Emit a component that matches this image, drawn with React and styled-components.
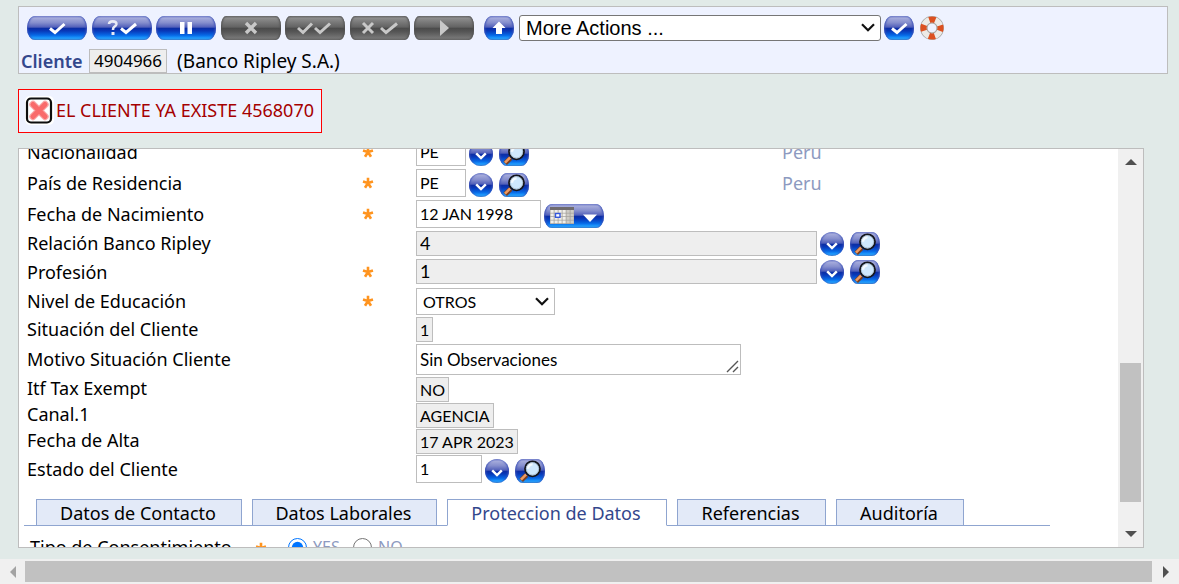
import React from 'react';
import styled, { createGlobalStyle, css } from 'styled-components';

const labelFont = '"Noto Sans", "Open Sans", sans-serif';
const fieldFont = 'Lato, "Noto Sans", sans-serif';
const uiFont = '"Liberation Sans", Arial, sans-serif';

const GlobalStyle = createGlobalStyle`
  *, *::before, *::after { box-sizing: border-box; }
  body { margin: 0; background: #e1eae8; color: #000; font-family: ${labelFont}; font-size: 18px; }
  button, input, select, textarea { font: inherit; color: inherit; margin: 0; }
`;

const Page = styled.div`
  display: flex;
  flex-direction: column;
  height: 100vh;
  overflow: hidden;
  padding-top: 6px;
`;

const Header = styled.header`
  margin: 0 11px 0 18px;
  background: #eef2ff;
  border: 1px solid #bdbdbd;
  height: 68px;
  flex: none;
`;

const Toolbar = styled.div`
  display: flex;
  align-items: center;
  padding: 8px 8px 0;
`;

const ActionGroup = styled.div`
  display: flex;
  justify-content: space-between;
  width: 447px;
  margin-right: 10px;
`;

const blueGloss = css`
  background: linear-gradient(180deg, #7b86cc 0%, #a3a9da 10%, #858ecd 28%, #5361ba 46%, #0c2ea6 52%, #0838b8 62%, #0668e6 80%, #1e9cff 92%, #3a86d0 100%);
  box-shadow: inset 2px 0 2px -1px #3a50b8, inset -2px 0 2px -1px #3a50b8;
`;
const greyGloss = css`
  background: linear-gradient(180deg, #6a6a6a 0%, #8c8c8c 10%, #747474 30%, #626262 47%, #4a4a4a 50%, #565656 66%, #747474 90%, #6a6a6a 100%);
  box-shadow: inset 2px 0 2px -1px #505050, inset -2px 0 2px -1px #505050;
`;

const GlossButton = styled.button`
  display: flex;
  align-items: center;
  justify-content: center;
  flex: none;
  width: ${(p) => p.$width || 60}px;
  height: 24px;
  padding: 0;
  border: 0;
  border-radius: ${(p) => (p.$round ? '12px' : p.$grey ? '5px / 10px' : '8px / 12px')};
  ${(p) => (p.$grey ? greyGloss : blueGloss)}
  svg { display: block; }
`;

const SelectWrap = styled.span`
  position: relative;
  display: inline-flex;
  width: 139px;
  svg { position: absolute; right: 6px; top: 50%; margin-top: -5px; pointer-events: none; }
`;

const ActionsWrap = styled(SelectWrap)`
  width: 362px;
  margin: 0 3px 0 5px;
`;

const ActionSelect = styled.select`
  appearance: none;
  width: 100%;
  height: 26px;
  padding: 0 24px 0 6px;
  font-family: ${uiFont};
  font-size: 20px;
  background: #fff;
  border: 1px solid #767676;
  border-radius: 3px;
`;

const FormSelect = styled.select`
  appearance: none;
  width: 100%;
  height: 27px;
  padding: 0 24px 0 6px;
  font-family: ${fieldFont};
  font-size: 16px;
  background: #fff;
  border: 1px solid #bdbdbd;
  border-radius: 0;
`;

const HelpLink = styled.a`
  display: block;
  margin-left: 6px;
  svg { display: block; }
`;

const RecordLine = styled.div`
  display: flex;
  align-items: center;
  padding: 8px 2px 0;
  height: 32px;
  line-height: 24px;
`;

const RecordType = styled.span`
  width: 68px;
  color: #33478c;
  font-weight: 600;
`;

const RecordId = styled.output`
  padding: 0 4px;
  margin-right: 10px;
  background: #eee;
  border: 1px solid #bdbdbd;
  line-height: 22px;
  font-size: 17px;
`;

const RecordName = styled.span`
  font-size: 19px;
`;

const ErrorBox = styled.div`
  display: flex;
  align-items: center;
  align-self: flex-start;
  gap: 2px;
  height: 44px;
  margin: 15px 0 15px 18px;
  padding: 0 7px 2px 6px;
  flex: none;
  white-space: nowrap;
  background: #eef2ff;
  border: 1px solid #f00;
  color: #a50000;
  svg { flex: none; }
`;

const Panel = styled.main`
  display: flex;
  flex: 1;
  min-height: 0;
  margin: 0 35px 11px 18px;
  background: #fff;
  border: 1px solid #bdbdbd;
  overflow: hidden;
`;

const Scrolled = styled.form`
  flex: 1;
  min-width: 0;
  margin-top: -12px;
`;

const Rows = styled.div`
  padding-left: 8px;
`;

const Row = styled.div`
  display: flex;
  align-items: center;
  height: ${(p) => p.$height}px;
`;

const Label = styled.label`
  width: 335px;
  padding-bottom: 2px;
  line-height: 24px;
`;

const StarCell = styled.span`
  width: 54px;
  padding-bottom: 2px;
  svg { display: block; }
`;

const Controls = styled.span`
  display: flex;
  align-items: flex-end;
  align-self: flex-start;
  gap: 3px;
  min-width: 366px;
  padding-top: 1px;
`;

const TextInput = styled.input`
  width: ${(p) => p.$width}px;
  height: ${(p) => (p.$large ? 25 : 28)}px;
  padding: 0 3px 2px;
  border: 1px solid #bdbdbd;
  border-radius: 0;
  background: ${(p) => (p.readOnly ? '#eee' : '#fff')};
  font-family: ${fieldFont};
  font-size: ${(p) => (p.$large ? 18 : 16)}px;
`;

const Value = styled.output`
  height: 25px;
  padding: 0 3px;
  border: 1px solid #bdbdbd;
  background: #eee;
  font-family: ${fieldFont};
  font-size: 16px;
  line-height: 24px;
`;

const AreaWrap = styled.span`
  position: relative;
  width: 325px;
  height: 31px;
  svg { position: absolute; right: 2px; bottom: 2px; }
`;

const Area = styled.textarea`
  display: block;
  width: 100%;
  height: 31px;
  padding: 3px;
  resize: none;
  overflow: hidden;
  border: 1px solid #bdbdbd;
  font-family: ${fieldFont};
  font-size: 17px;
  line-height: 24px;
`;

const Pair = styled.span`
  display: flex;
  gap: 6px;
`;

const Description = styled.span`
  padding-bottom: 2px;
  color: #8d9ac0;
`;

const Tabs = styled.div`
  display: flex;
  gap: 10px;
  width: 1026px;
  max-width: 100%;
  margin: 14px 0 0 5px;
  padding-left: 12px;
  border-bottom: 1px solid #8fa5d0;
`;

const Tab = styled.button`
  width: ${(p) => p.$width}px;
  height: 27px;
  margin-bottom: -1px;
  padding: 0 2px 0 0;
  white-space: nowrap;
  line-height: 24px;
  border: 1px solid #8fa5d0;
  border-bottom-color: ${(p) => (p.$active ? '#fff' : '#8fa5d0')};
  background: ${(p) => (p.$active ? '#fff' : '#e3eaf8')};
  color: ${(p) => (p.$active ? '#33478c' : '#000')};
`;

const ConsentRow = styled.fieldset`
  display: flex;
  align-items: center;
  margin: 7px 0 0 11px;
  padding: 0;
  border: 0;
  height: 28px;
`;

const ConsentLabel = styled.span`
  width: 225px;
`;

const ConsentStar = styled.span`
  width: 33px;
`;

const RadioLabel = styled.label`
  display: flex;
  align-items: center;
  gap: 6px;
  width: 65px;
  color: #8d9ac0;
  font-size: 16px;
  input { width: 19px; height: 19px; }
`;

const VTrack = styled.div`
  display: flex;
  flex-direction: column;
  align-items: center;
  flex: none;
  width: 25px;
  padding: 10px 0;
  background: #f0f0f0;
`;

const VSpace = styled.div`
  flex: ${(p) => p.$grow};
`;

const VThumb = styled.div`
  flex: 138;
  width: 21px;
  background: #c1c1c1;
`;

const HTrack = styled.div`
  display: flex;
  align-items: center;
  flex: none;
  height: 25px;
  background: #f0f0f0;
`;

const HEnd = styled.span`
  display: flex;
  justify-content: center;
  width: ${(p) => p.$width}px;
`;

const HThumb = styled.div`
  flex: 1;
  height: 21px;
  background: #c1c1c1;
`;

const Check = ({ color = '#fff' }) => (
  <svg width="18" height="14" viewBox="0 0 18 14"><path d="M2 7.5 L7 11.5 L16.5 3" fill="none" stroke={color} strokeWidth="3" /></svg>
);
const Cross = () => (
  <svg width="14" height="14" viewBox="0 0 14 14"><path d="M2 2 L12 12 M12 2 L2 12" fill="none" stroke="#c8c8c8" strokeWidth="3.4" /></svg>
);
const QueryCheck = () => (
  <svg width="32" height="18" viewBox="0 0 32 18">
    <path d="M3 5 Q3.2 2.4 6.8 2.4 Q10.6 2.4 10.4 5.2 Q10.2 7 8 8.2 Q7 8.8 7 11" fill="none" stroke="#e8eaf6" strokeWidth="2.6" />
    <rect x="5.5" y="13" width="3" height="3" fill="#e8eaf6" />
    <path d="M15 9.5 L20 13.5 L30 5" fill="none" stroke="#fff" strokeWidth="3" />
  </svg>
);
const Pause = () => (
  <svg width="12" height="12" viewBox="0 0 12 12"><path d="M0 0h4.5v12H0zM7.5 0H12v12H7.5z" fill="#fff" /></svg>
);
const DoubleCheck = () => (
  <svg width="36" height="14" viewBox="0 0 36 14"><path d="M1 7 L6 11.5 L15 2.5 M18 7 L23 11.5 L33 2.5" fill="none" stroke="#c8c8c8" strokeWidth="3" /></svg>
);
const CrossCheck = () => (
  <svg width="38" height="14" viewBox="0 0 38 14"><path d="M2 2 L12 12 M12 2 L2 12 M20 7 L25 11.5 L36 2.5" fill="none" stroke="#c8c8c8" strokeWidth="3" /></svg>
);
const Play = () => (
  <svg width="9" height="16" viewBox="0 0 9 16"><path d="M0 0 L9 8 L0 16Z" fill="#c8c8c8" /></svg>
);
const UpArrow = () => (
  <svg width="14" height="14" viewBox="0 0 14 14"><path d="M7 0.5 L13.5 7 H10 V13 H4 V7 H0.5Z" fill="#fff" /></svg>
);
const Chevron = () => (
  <svg width="14" height="9" viewBox="0 0 14 9"><path d="M1 1.2 L7 7.2 L13 1.2" fill="none" stroke="#111" strokeWidth="2.2" /></svg>
);
const SmallChevron = () => (
  <svg width="24" height="24" viewBox="0 0 24 24"><path d="M7.2 11.3 L12 16 L16.8 11.3" fill="none" stroke="#fff" strokeWidth="2.4" /></svg>
);
const Magnifier = () => (
  <svg width="30" height="24" viewBox="0 0 30 24">
    <path d="M11.5 16 L6.2 21.2" stroke="#7a3e20" strokeWidth="5" />
    <path d="M11.2 15.4 L6 20.6" stroke="#ee9a62" strokeWidth="2.6" />
    <circle cx="17.5" cy="9.8" r="7.5" fill="#cfe8fd" stroke="#14161c" strokeWidth="1.8" />
    <path d="M12.7 9.8 a4.8 4.8 0 0 1 4.8-4.8" fill="none" stroke="#f4faff" strokeWidth="3" />
    <circle cx="17.5" cy="9.8" r="6.2" fill="none" stroke="#9fb4c8" strokeWidth="0.8" />
  </svg>
);
const CalendarIcon = () => (
  <svg width="60" height="24" viewBox="0 0 60 24">
    <rect x="6" y="3" width="24" height="17" fill="#a3a09b" />
    <rect x="6" y="3" width="24" height="3" fill="#6f6b6e" />
    {[0, 1, 2, 3].map((r) => [0, 1, 2, 3, 4, 5].map((c) => (
      <rect key={`${r}-${c}`} x={6.5 + c * 4} y={6 + r * 3.5} width="3.2" height="2.8" fill={c > 3 ? '#cfccc6' : '#f1efea'} />
    )))}
    <rect x="11.5" y="9.5" width="4.5" height="3.8" fill="#fff" stroke="#3558dc" strokeWidth="1.4" />
    <path d="M39 10.5 H53 L46 18Z" fill="#fff" />
  </svg>
);
const Lifebuoy = () => (
  <svg width="24" height="24" viewBox="0 0 24 24">
    <circle cx="12" cy="12" r="8.4" fill="none" stroke="#a5a5a2" strokeWidth="7" />
    <circle cx="12" cy="12" r="8.4" fill="none" stroke="#eceae6" strokeWidth="5.6" />
    <circle cx="12" cy="12" r="8.4" fill="none" stroke="#dc5020" strokeWidth="6.4" strokeDasharray="6 7.195" strokeDashoffset="3" />
    <circle cx="12" cy="12" r="5" fill="none" stroke="#aaa39c" strokeWidth="1" />
  </svg>
);
const ErrorIcon = () => (
  <svg width="29" height="29" viewBox="0 0 29 29">
    <rect x="0" y="0" width="29" height="29" rx="5" fill="#fff" />
    <rect x="2" y="2.5" width="24" height="24" rx="4" fill="#fff" stroke="#0d0d0d" strokeWidth="2.2" />
    <path d="M8 8.5 L20 20.5 M20 8.5 L8 20.5" stroke="#f9a9a9" strokeWidth="7.4" strokeLinecap="round" />
    <path d="M8 8.5 L20 20.5 M20 8.5 L8 20.5" stroke="#f96a6a" strokeWidth="5" strokeLinecap="round" />
  </svg>
);
const Star = () => (
  <svg width="12" height="12" viewBox="0 0 12 12">
    <path d="M6 6 V0.8 M6 6 L1 4.4 M6 6 L11 4.4 M6 6 L3 10.8 M6 6 L9 10.8" stroke="#ff941f" strokeWidth="2.6" />
  </svg>
);
const ResizeGrip = () => (
  <svg width="13" height="13" viewBox="0 0 13 13"><path d="M1 12 L12 1 M7 12 L12 7" stroke="#555" strokeWidth="1.4" /></svg>
);
const Triangle = ({ d, color = '#505050', w = 12, h = 6 }) => (
  <svg width={w} height={h} viewBox={`0 0 ${w} ${h}`}><path d={d} fill={color} /></svg>
);

const Lookup = ({ name }) => (
  <Pair>
    <GlossButton type="button" $round $width={24} aria-label={`Abrir ${name}`}><SmallChevron /></GlossButton>
    <GlossButton type="button" $width={30} aria-label={`Buscar ${name}`}><Magnifier /></GlossButton>
  </Pair>
);

const Field = ({ id, label, height, required, children, description }) => (
  <Row $height={height}>
    <Label htmlFor={id}>{label}</Label>
    <StarCell>{required && <Star />}</StarCell>
    <Controls>{children}</Controls>
    {description && <Description>{description}</Description>}
  </Row>
);

const actions = [
  { name: 'Commit', icon: <Check /> },
  { name: 'Validate', icon: <QueryCheck /> },
  { name: 'Hold', icon: <Pause /> },
  { name: 'Delete', icon: <Cross />, grey: true },
  { name: 'Authorise', icon: <DoubleCheck />, grey: true },
  { name: 'Reverse', icon: <CrossCheck />, grey: true },
  { name: 'Next', icon: <Play />, grey: true },
];

const tabs = [
  { name: 'Datos de Contacto', width: 206 },
  { name: 'Datos Laborales', width: 185 },
  { name: 'Proteccion de Datos', width: 220, active: true },
  { name: 'Referencias', width: 149 },
  { name: 'Auditoría', width: 128 },
];

export default function App() {
  return (
    <>
      <GlobalStyle />
      <Page>
        <Header>
          <Toolbar>
            <ActionGroup>
              {actions.map((a) => (
                <GlossButton key={a.name} type="button" $grey={a.grey} aria-label={a.name}>{a.icon}</GlossButton>
              ))}
            </ActionGroup>
            <GlossButton type="button" $width={30} aria-label="Return"><UpArrow /></GlossButton>
            <ActionsWrap>
              <ActionSelect aria-label="More actions"><option>More Actions ...</option></ActionSelect>
              <Chevron />
            </ActionsWrap>
            <GlossButton type="button" $width={30} aria-label="Go"><Check /></GlossButton>
            <HelpLink href="#help" aria-label="Help"><Lifebuoy /></HelpLink>
          </Toolbar>
          <RecordLine>
            <RecordType>Cliente</RecordType>
            <RecordId>4904966</RecordId>
            <RecordName>(Banco Ripley S.A.)</RecordName>
          </RecordLine>
        </Header>

        <ErrorBox role="alert"><ErrorIcon />EL CLIENTE YA EXISTE 4568070</ErrorBox>

        <Panel>
          <Scrolled>
            <Rows>
              <Field id="nac" label="Nacionalidad" height={31} required description="Peru">
                <TextInput id="nac" $width={50} defaultValue="PE" /><Lookup name="Nacionalidad" />
              </Field>
              <Field id="res" label="País de Residencia" height={31} required description="Peru">
                <TextInput id="res" $width={50} defaultValue="PE" /><Lookup name="País" />
              </Field>
              <Field id="fnac" label="Fecha de Nacimiento" height={31} required>
                <TextInput id="fnac" $width={125} defaultValue="12 JAN 1998" />
                <GlossButton type="button" aria-label="Calendario"><CalendarIcon /></GlossButton>
              </Field>
              <Field id="rel" label="Relación Banco Ripley" height={28}>
                <TextInput id="rel" $width={401} $large readOnly value="4" /><Lookup name="Relación" />
              </Field>
              <Field id="prof" label="Profesión" height={29} required>
                <TextInput id="prof" $width={401} $large readOnly value="1" /><Lookup name="Profesión" />
              </Field>
              <Field id="edu" label="Nivel de Educación" height={29} required>
                <SelectWrap>
                  <FormSelect id="edu"><option>OTROS</option></FormSelect>
                  <Chevron />
                </SelectWrap>
              </Field>
              <Field id="sit" label="Situación del Cliente" height={27}><Value id="sit">1</Value></Field>
              <Field id="mot" label="Motivo Situación Cliente" height={33}>
                <AreaWrap><Area id="mot" rows={1} defaultValue="Sin Observaciones" /><ResizeGrip /></AreaWrap>
              </Field>
              <Field id="itf" label="Itf Tax Exempt" height={26}><Value id="itf">NO</Value></Field>
              <Field id="can" label="Canal.1" height={26}><Value id="can">AGENCIA</Value></Field>
              <Field id="alta" label="Fecha de Alta" height={26}><Value id="alta">17 APR 2023</Value></Field>
              <Field id="est" label="Estado del Cliente" height={31}>
                <TextInput id="est" $width={66} defaultValue="1" /><Lookup name="Estado" />
              </Field>
            </Rows>
            <Tabs role="tablist">
              {tabs.map((t) => (
                <Tab key={t.name} type="button" role="tab" aria-selected={!!t.active} $width={t.width} $active={t.active}>{t.name}</Tab>
              ))}
            </Tabs>
            <ConsentRow aria-label="Tipo de Consentimiento">
              <ConsentLabel>Tipo de Consentimiento</ConsentLabel>
              <ConsentStar><Star /></ConsentStar>
              <RadioLabel><input type="radio" name="consent" defaultChecked />YES</RadioLabel>
              <RadioLabel><input type="radio" name="consent" />NO</RadioLabel>
            </ConsentRow>
          </Scrolled>
          <VTrack>
            <Triangle d="M0 6 L6 0 L12 6Z" />
            <VSpace $grow={196} />
            <VThumb />
            <VSpace $grow={29} />
            <Triangle d="M0 0 L6 6 L12 0Z" />
          </VTrack>
        </Panel>

        <HTrack>
          <HEnd $width={25}><Triangle d="M6 0 L0 6 L6 12Z" color="#a3a3a3" w={6} h={12} /></HEnd>
          <HThumb />
          <HEnd $width={27}><Triangle d="M0 0 L6 6 L0 12Z" w={6} h={12} /></HEnd>
        </HTrack>
      </Page>
    </>
  );
}
